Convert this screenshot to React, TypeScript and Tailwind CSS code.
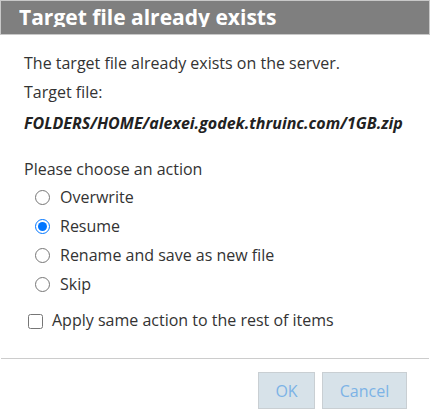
import { useState } from 'react';

const actions = ['Overwrite', 'Resume', 'Rename and save as new file', 'Skip'];

export default function App() {
  const [action, setAction] = useState('Resume');
  const [applyAll, setApplyAll] = useState(false);

  return (
    <div className="w-[430px] h-[418px] bg-white font-['Open_Sans',sans-serif] text-[#333]">
      {/* Title bar */}
      <div className="h-[35px] border border-[#c8c8c8] bg-[#7f7f7f] pl-[18px]">
        <div className="mt-[1px] h-[25px] overflow-hidden text-[21px] leading-[30px] font-bold text-white whitespace-nowrap">
          Target file already exists
        </div>
      </div>

      {/* Body */}
      <div className="pl-[24px] pt-[14px] text-[16px]">
        <p className="leading-[29px]">The target file already exists on the server.</p>
        <p className="leading-[29px]">Target file:</p>
        <p className="mt-[2px] leading-[29px] font-bold italic text-[#222]">
          FOLDERS/HOME/alexei.godek.thruinc.com/1GB.zip
        </p>

        <p className="mt-[17px] leading-[28px]">Please choose an action</p>
        <div className="flex flex-col">
          {actions.map((a) => (
            <label key={a} className="flex h-[29px] items-center pl-[11px]">
              <input
                type="radio"
                name="action"
                checked={action === a}
                onChange={() => setAction(a)}
                className="m-0 h-[15px] w-[15px]"
              />
              <span className="ml-[10px] leading-[29px]">{a}</span>
            </label>
          ))}
        </div>

        <label className="mt-[7px] flex h-[29px] items-center pl-[4px]">
          <input
            type="checkbox"
            checked={applyAll}
            onChange={() => setApplyAll(!applyAll)}
            className="m-0 h-[15px] w-[15px] translate-y-[1px]"
          />
          <span className="ml-[9px] leading-[29px]">Apply same action to the rest of items</span>
        </label>
      </div>

      <div className="mx-[1px] mt-[23px] h-px bg-[#cccccc]" />

      {/* Footer */}
      <div className="mt-[13px] flex justify-end gap-[7px] pr-[23px]">
        <button className="h-[37px] w-[57px] border border-[#c9cfd3] bg-[#d7e2e9] text-[16px] text-[#7cb3e6]">
          OK
        </button>
        <button className="h-[37px] w-[85px] border border-[#c9cfd3] bg-[#d7e2e9] text-[16px] text-[#7cb3e6]">
          Cancel
        </button>
      </div>
    </div>
  );
}
